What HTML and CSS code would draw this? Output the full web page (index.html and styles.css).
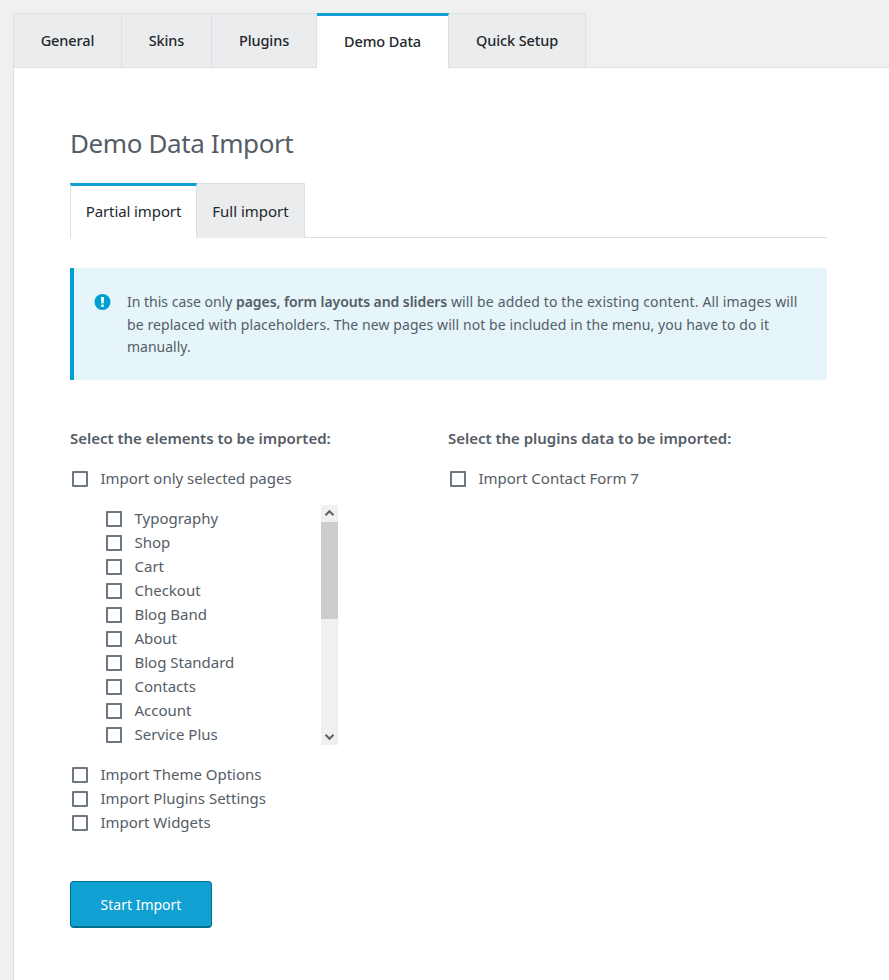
FILE: index.html
```html
<!DOCTYPE html>
<html lang="en">
<head>
<meta charset="utf-8">
<title>Demo Data Import</title>
<link rel="stylesheet" href="styles.css">
</head>
<body>
<nav class="tabs">
  <a class="tab tab-general">General</a>
  <a class="tab tab-skins">Skins</a>
  <a class="tab tab-plugins">Plugins</a>
  <a class="tab tab-demo active">Demo Data</a>
  <a class="tab tab-setup">Quick Setup</a>
</nav>
<main class="panel">
  <h1>Demo Data Import</h1>
  <nav class="subtabs">
    <a class="subtab partial active">Partial import</a>
    <a class="subtab full">Full import</a>
  </nav>
  <div class="notice">
    <svg class="notice-icon" width="17" height="16" viewBox="0 0 17 16"><circle cx="8.5" cy="8" r="8" fill="#00a0d2"/><path d="M6.9 3h3.2L9.6 9.4H7.4Z" fill="#fff"/><rect x="7.1" y="10.5" width="2.8" height="2.6" rx=".8" fill="#fff"/></svg>
    <p><span class="line">In this case only <b>pages, form layouts and sliders</b><span class="rest"> will be added to the existing content. All images will</span></span> <span class="line second">be replaced with placeholders. The new pages will not be included in the menu, you have to do it</span> <span class="line">manually.</span></p>
  </div>
  <div class="columns">
    <section class="column">
      <h2>Select the elements to be imported:</h2>
      <label class="option"><i class="box"></i><span>Import only selected pages</span></label>
      <div class="pages">
        <div class="page-list">
          <label class="option"><i class="box"></i><span>Typography</span></label>
          <label class="option"><i class="box"></i><span>Shop</span></label>
          <label class="option"><i class="box"></i><span>Cart</span></label>
          <label class="option"><i class="box"></i><span>Checkout</span></label>
          <label class="option"><i class="box"></i><span>Blog Band</span></label>
          <label class="option"><i class="box"></i><span>About</span></label>
          <label class="option"><i class="box"></i><span>Blog Standard</span></label>
          <label class="option"><i class="box"></i><span>Contacts</span></label>
          <label class="option"><i class="box"></i><span>Account</span></label>
          <label class="option"><i class="box"></i><span>Service Plus</span></label>
        </div>
        <div class="scrollbar">
          <svg width="17" height="17" viewBox="0 0 17 17"><path d="M4.5 10.2 8.5 6.2l4 4" fill="none" stroke="#606060" stroke-width="2"/></svg>
          <div class="thumb"></div>
          <svg class="down" width="17" height="17" viewBox="0 0 17 17"><path d="m4.5 6.8 4 4 4-4" fill="none" stroke="#606060" stroke-width="2"/></svg>
        </div>
      </div>
      <label class="option"><i class="box"></i><span>Import Theme Options</span></label>
      <label class="option"><i class="box"></i><span>Import Plugins Settings</span></label>
      <label class="option"><i class="box"></i><span>Import Widgets</span></label>
    </section>
    <section class="column">
      <h2>Select the plugins data to be imported:</h2>
      <label class="option"><i class="box"></i><span>Import Contact Form 7</span></label>
    </section>
  </div>
  <button class="start">Start Import</button>
</main>
</body>
</html>
```
FILE: styles.css
```css
* { box-sizing: border-box; }
body {
  margin: 0;
  padding: 13px 0 0 13px;
  height: 980px;
  overflow: hidden;
  background: #f0f0f0;
  color: #555d66;
  font-family: "Noto Sans", "Open Sans", sans-serif;
  font-size: 15px;
}
.tabs { display: flex; height: 55px; border-left: 1px solid #dddfe3; border-bottom: 1px solid #dddfe3; }
.tab {
  height: 54px;
  line-height: 52px;
  text-align: center;
  background: #ebecee;
  border-top: 1px solid #dddfe3;
  border-right: 1px solid #dddfe3;
  color: #23282d;
  font-weight: 500;
  font-size: 14.5px;
  letter-spacing: -0.1px;
  white-space: nowrap;
}
.tab-general { width: 108px; }
.tab-skins { width: 90px; }
.tab-plugins { width: 105px; }
.tab-demo { width: 132px; }
.tab-setup { width: 137px; }
.tab.active { height: 55px; line-height: 50px; background: #fff; border-top: 3px solid #11a0d2; }
.panel { height: 912px; padding: 56px 62px 0 56px; background: #fff; border-left: 1px solid #dddfe3; }
h1 { margin: 0 0 21px; font-size: 26px; line-height: 38px; font-weight: 400; letter-spacing: -0.4px; white-space: nowrap; }
.subtabs { display: flex; height: 55px; border-bottom: 1px solid #dddfe3; }
.subtab {
  height: 55px;
  line-height: 55px;
  text-align: center;
  background: #ebecee;
  border-top: 1px solid #dddfe3;
  border-right: 1px solid #dddfe3;
  color: #23282d;
}
.subtab.active { line-height: 51px; background: #fff; border-top: 3px solid #11a0d2; border-left: 1px solid #dddfe3; letter-spacing: -0.1px; }
.partial { width: 127px; }
.full { width: 108px; }
.notice { display: flex; height: 112px; margin-top: 30px; padding: 23px 0 0 20px; background: #e5f5fa; border-left: 4px solid #00a0d2; }
.notice-icon { flex: none; margin: 3px 16px 0 0; }
.notice p { margin: 0; font-size: 14px; line-height: 22.5px; }
.notice b { font-weight: 600; letter-spacing: -0.07px; }
.line { display: block; white-space: nowrap; }
.rest { letter-spacing: 0.14px; }
.second { letter-spacing: 0.08px; }
.columns { display: flex; margin-top: 46px; }
.column { width: 378px; flex: none; }
h2 { margin: 0 0 17px; font-size: 15px; line-height: 24px; font-weight: 600; letter-spacing: -0.02px; white-space: nowrap; }
.option { display: flex; align-items: center; height: 24px; padding-left: 2px; white-space: nowrap; letter-spacing: -0.01px; }
.option span { margin-bottom: 2px; }
.box { width: 16px; height: 16px; margin-right: 12.5px; border: 2px solid #6c7781; border-radius: 1px; }
.pages { display: flex; justify-content: space-between; width: 268px; height: 240px; margin: 14px 0 18px; }
.page-list { padding: 2px 0 0 34px; overflow: hidden; }
.scrollbar { display: flex; flex-direction: column; width: 17px; background: #f0f0f0; }
.scrollbar svg { display: block; }
.thumb { height: 97px; background: #cdcdcd; }
.down { margin-top: auto; }
.start {
  display: block;
  width: 142px;
  height: 47px;
  margin-top: 46px;
  padding: 0;
  border: 1px solid #006e91;
  border-bottom-width: 2px;
  border-radius: 4px;
  background: #11a0d2;
  color: #fff;
  font: 14px "Noto Sans", "Open Sans", sans-serif;
}
```
